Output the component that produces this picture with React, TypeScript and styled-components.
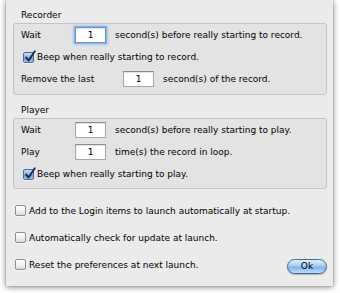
import React from "react";
import styled, { createGlobalStyle, css } from "styled-components";

const GlobalStyle = createGlobalStyle`
  html, body { margin: 0; padding: 0; background: #ffffff; }
  body {
    font-family: "DejaVu Sans", "Noto Sans", sans-serif;
    font-size: 9px;
    color: #000;
    width: 340px;
    height: 293px;
    overflow: hidden;
  }
`;

const Window = styled.div`
  box-sizing: border-box;
  margin-left: 6px;
  width: 327px;
  height: 286px;
  padding-top: 10px;
  background: #ebebeb;
  box-shadow: 0 1px 6px rgba(0, 0, 0, 0.5), 0 0 1px rgba(0, 0, 0, 0.4);
  display: flex;
  flex-direction: column;
`;

const Title = styled.div<{ $top?: number }>`
  height: 11px;
  line-height: 11px;
  padding-left: 15px;
  margin-top: ${(p) => p.$top ?? 0}px;
`;

const Group = styled.div<{ $padBottom: number }>`
  box-sizing: border-box;
  margin: 2px 6px 0 7px;
  border: 1px solid #c4c4c4;
  border-radius: 3px;
  background: #e3e3e3;
  padding: 0 0 ${(p) => p.$padBottom}px 7px;
  display: flex;
  flex-direction: column;
`;

const Row = styled.div<{ $h?: number }>`
  height: ${(p) => p.$h ?? 22}px;
  display: flex;
  align-items: center;
  white-space: nowrap;
`;

const Label = styled.span<{ $w: number }>`
  width: ${(p) => p.$w}px;
  flex: none;
`;

const NumberField = styled.div<{ $focused?: boolean }>`
  box-sizing: border-box;
  width: 31px;
  height: 16px;
  margin-right: 9px;
  background: #fff;
  border: 1px solid #a6a6a6;
  border-top-color: #8c8c8c;
  box-shadow: inset 0 1px 1px rgba(0, 0, 0, 0.12);
  display: flex;
  align-items: center;
  justify-content: center;
  line-height: 14px;
  ${(p) =>
    p.$focused &&
    css`
      border-color: #6f93c4;
      box-shadow: 0 0 0 1px #8cb6e8, 0 0 2px 2px #a9c9ef, inset 0 1px 1px rgba(0, 0, 0, 0.12);
    `}
`;

const CheckRow = styled.label<{ $indent: number }>`
  display: flex;
  align-items: center;
  gap: 3px;
  margin-left: ${(p) => p.$indent}px;
  white-space: nowrap;
`;

const Box = styled.span<{ $checked?: boolean }>`
  position: relative;
  box-sizing: border-box;
  width: 11px;
  height: 11px;
  flex: none;
  border-radius: 2px;
  border: 1px solid #8e8e8e;
  background: linear-gradient(#ffffff, #f2f2f2 50%, #dcdcdc);
  box-shadow: 0 1px 0 rgba(255, 255, 255, 0.6);
  ${(p) =>
    p.$checked &&
    css`
      border-color: #4a6c9c;
      background: linear-gradient(#c7ddf5, #87b4e6 50%, #5e98da 55%, #a4cbf3);
    `}
`;

const Tick = styled.svg`
  position: absolute;
  left: 0px;
  top: -3px;
  width: 12px;
  height: 12px;
  overflow: visible;
`;

const Footer = styled.div`
  margin-top: 8px;
  display: flex;
  flex-direction: column;
`;

const FooterRow = styled.div`
  height: 27px;
  display: flex;
  align-items: center;
  justify-content: space-between;
  padding-right: 6px;
`;

const OkButton = styled.button`
  box-sizing: border-box;
  width: 40px;
  height: 15px;
  margin-top: 4px;
  padding: 0;
  border-radius: 8px;
  border: 1px solid #45679a;
  background: linear-gradient(#e1eefb, #a9cdf1 45%, #7fb4ea 55%, #b9dbfb);
  box-shadow: 0 1px 1px rgba(0, 0, 0, 0.25);
  font-family: "DejaVu Sans", "Noto Sans", sans-serif;
  font-size: 9px;
  line-height: 13px;
  color: #000;
`;

const Check: React.FC<{ checked?: boolean; indent: number; children: React.ReactNode }> = ({
  checked,
  indent,
  children,
}) => (
  <CheckRow $indent={indent}>
    <Box $checked={checked}>
      {checked && (
        <Tick viewBox="0 0 12 12">
          <path d="M2.2 7.6 L4.6 10.6 L10.8 1.2" fill="none" stroke="#1b2b44" strokeWidth="1.9" strokeLinecap="round" strokeLinejoin="round" />
        </Tick>
      )}
    </Box>
    <span>{children}</span>
  </CheckRow>
);

export default function App() {
  return (
    <>
      <GlobalStyle />
      <Window>
        <Title>Recorder</Title>
        <Group $padBottom={4}>
          <Row>
            <Label $w={54}>Wait</Label>
            <NumberField $focused>1</NumberField>
            <span>second(s) before really starting to record.</span>
          </Row>
          <Row>
            <Check checked indent={2}>
              Beep when really starting to record.
            </Check>
          </Row>
          <Row>
            <Label $w={102}>Remove the last</Label>
            <NumberField>1</NumberField>
            <span>second(s) of the record.</span>
          </Row>
        </Group>

        <Title $top={10}>Player</Title>
        <Group $padBottom={3}>
          <Row>
            <Label $w={54}>Wait</Label>
            <NumberField>1</NumberField>
            <span>second(s) before really starting to play.</span>
          </Row>
          <Row>
            <Label $w={54}>Play</Label>
            <NumberField>1</NumberField>
            <span>time(s) the record in loop.</span>
          </Row>
          <Row>
            <Check checked indent={2}>
              Beep when really starting to play.
            </Check>
          </Row>
        </Group>

        <Footer>
          <FooterRow>
            <Check indent={9}>Add to the Login items to launch automatically at startup.</Check>
          </FooterRow>
          <FooterRow>
            <Check indent={9}>Automatically check for update at launch.</Check>
          </FooterRow>
          <FooterRow>
            <Check indent={9}>Reset the preferences at next launch.</Check>
            <OkButton>Ok</OkButton>
          </FooterRow>
        </Footer>
      </Window>
    </>
  );
}
